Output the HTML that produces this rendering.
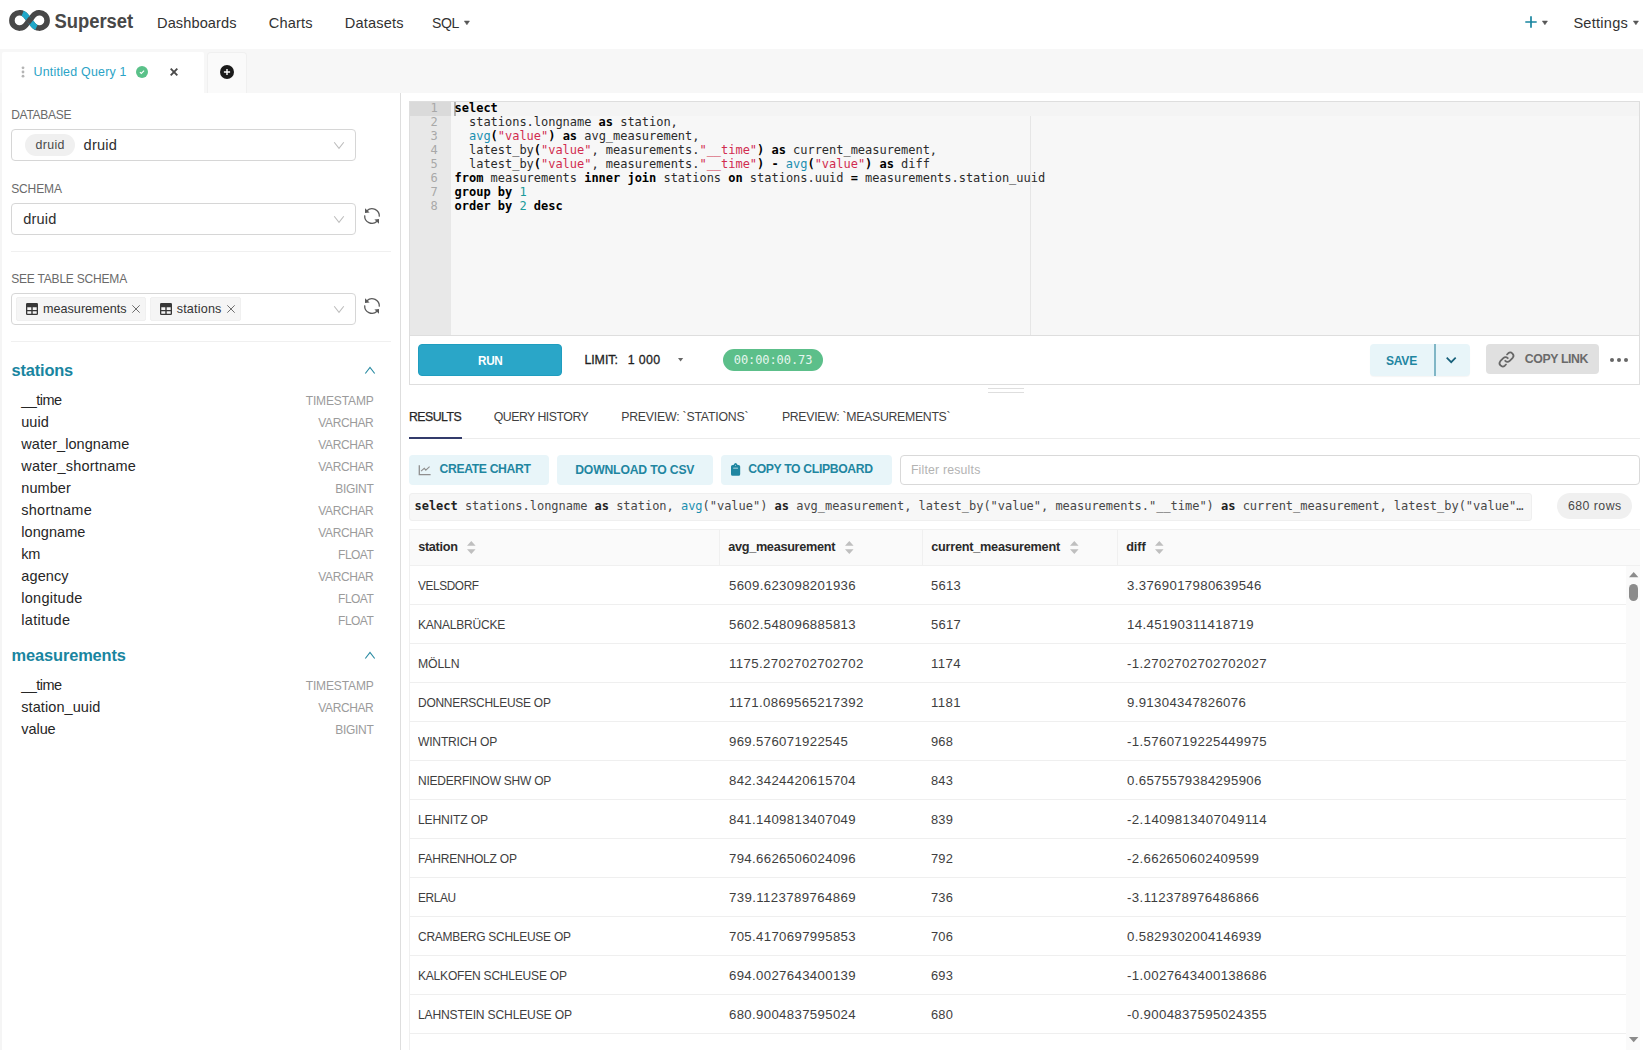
<!DOCTYPE html>
<html lang="en">
<head>
<meta charset="utf-8">
<title>Superset - SQL Lab</title>
<style>
*{box-sizing:border-box;margin:0;padding:0}
html,body{width:1643px;height:1050px;overflow:hidden;background:#fff}
body{position:relative;font-family:"Liberation Sans",sans-serif;color:#333;font-size:14px}
.a{position:absolute;white-space:nowrap}
.mono{font-family:"DejaVu Sans Mono","Liberation Mono",monospace}
svg{position:absolute;overflow:visible}
b{font-weight:bold;color:#000}
.k1{color:#1a8fb0}
.k2{color:#d12c4f}
.k3{color:#1a9a9a}
</style>
</head>
<body>

<!-- NAV -->
<div class="a" style="left:0px;top:0px;width:1643px;height:49px;background:#fff"></div>
<svg style="left:0;top:0" width="150" height="48" viewBox="0 0 150 48">
<path d="M25.59 15.57 A7.7 7.7 0 1 0 25.59 25.23 L33.41 15.57 A7.7 7.7 0 1 1 33.41 25.23 Z" fill="none" stroke="#484848" stroke-width="5.6" stroke-linejoin="round"/>
<path d="M22.6 13.3 A7.7 7.7 0 0 1 25.59 15.57 L33.41 25.23 A7.7 7.7 0 0 0 36.4 27.5" fill="none" stroke="#20a7c9" stroke-width="5.6"/>
<path d="M27.6 22.75 L31.4 18.05" fill="none" stroke="#484848" stroke-width="5.6"/>
<text x="54.4" y="27.5" font-family="Liberation Sans, sans-serif" font-weight="bold" font-size="20" fill="#484848" textLength="78.8" lengthAdjust="spacingAndGlyphs">Superset</text>
</svg>
<div class="a" style="top:12.5px;font-size:14.6px;line-height:20px;height:20px;left:157px;color:#323232;letter-spacing:0.089px;">Dashboards</div>
<div class="a" style="top:12.5px;font-size:14.6px;line-height:20px;height:20px;left:268.8px;color:#323232;letter-spacing:0.163px;">Charts</div>
<div class="a" style="top:12.5px;font-size:14.6px;line-height:20px;height:20px;left:344.8px;color:#323232;letter-spacing:0.172px;">Datasets</div>
<div class="a" style="top:12.5px;font-size:14.6px;line-height:20px;height:20px;left:431.7px;color:#323232;letter-spacing:-0.374px;transform:scaleX(0.9630);transform-origin:0 50%;">SQL</div>
<svg style="left:464.1px;top:21px" width="5.8" height="3.8" viewBox="0 0 5.8 3.8"><path d="M0.3 0H5.5L2.9 3.8Z" fill="#555" stroke="#555" stroke-width="0.5" stroke-linejoin="round"/></svg>
<svg style="left:1525.2px;top:16px" width="12" height="12" viewBox="0 0 12 12"><path d="M6 0.3V11.7M0.3 6H11.7" stroke="#1985a0" stroke-width="1.7" fill="none"/></svg>
<svg style="left:1541.9px;top:20.9px" width="5.8" height="3.8" viewBox="0 0 5.8 3.8"><path d="M0.3 0H5.5L2.9 3.8Z" fill="#555" stroke="#555" stroke-width="0.5" stroke-linejoin="round"/></svg>
<div class="a" style="top:12.5px;font-size:14.6px;line-height:20px;height:20px;left:1573.4px;color:#323232;letter-spacing:0.238px;">Settings</div>
<svg style="left:1632.9px;top:20.9px" width="5.8" height="3.8" viewBox="0 0 5.8 3.8"><path d="M0.3 0H5.5L2.9 3.8Z" fill="#555" stroke="#555" stroke-width="0.5" stroke-linejoin="round"/></svg>
<!-- TABBAR -->
<div class="a" style="left:0px;top:49px;width:1643px;height:44px;background:#f7f7f7"></div>
<div class="a" style="left:2px;top:52px;width:202px;height:41px;background:#fff;border-radius:2px 2px 0 0"></div>
<div class="a" style="left:207px;top:52px;width:40px;height:41px;background:#fafafa;border:1px solid #f0f0f0;border-bottom:0;border-radius:4px 4px 0 0"></div>
<div class="a" style="left:0px;top:93px;width:2px;height:957px;background:#f5f5f5"></div>
<div class="a" style="left:400px;top:93px;width:1px;height:957px;background:#dedede"></div>
<svg style="left:21.4px;top:66.4px" width="4" height="12" viewBox="0 0 4 12"><circle cx="2" cy="1.8" r="1.4" fill="#b4b4b4"/><circle cx="2" cy="6" r="1.4" fill="#b4b4b4"/><circle cx="2" cy="10.2" r="1.4" fill="#b4b4b4"/></svg>
<div class="a" style="top:62px;font-size:12.4px;line-height:20px;height:20px;left:33.5px;color:#2ba3c6;letter-spacing:0.231px;">Untitled Query 1</div>
<svg style="left:136px;top:66px" width="12" height="12" viewBox="0 0 12 12"><circle cx="6" cy="6" r="6" fill="#5ac189"/><path d="M3.9 6.1L5.3 7.5L8.1 4.7" stroke="#fff" stroke-width="1.1" fill="none"/></svg>
<svg style="left:170px;top:68.1px" width="8" height="8" viewBox="0 0 8 8"><path d="M0.7 0.7L7.3 7.3M7.3 0.7L0.7 7.3" stroke="#4a4a4a" stroke-width="1.9" fill="none"/></svg>
<svg style="left:220px;top:65px" width="14" height="14" viewBox="0 0 14 14"><circle cx="7" cy="7" r="7" fill="#1b1b1b"/><path d="M7 3.9V10.1M3.9 7H10.1" stroke="#fff" stroke-width="1.4" fill="none"/></svg>
<!-- LEFT PANEL -->
<div class="a" style="top:104.5px;font-size:12px;line-height:20px;height:20px;left:11.2px;color:#6a6a6a;letter-spacing:-0.264px;">DATABASE</div>
<div class="a" style="top:178.5px;font-size:12px;line-height:20px;height:20px;left:11.2px;color:#6a6a6a;letter-spacing:-0.129px;">SCHEMA</div>
<div class="a" style="top:268.5px;font-size:12px;line-height:20px;height:20px;left:11.2px;color:#6a6a6a;letter-spacing:-0.196px;">SEE TABLE SCHEMA</div>
<div class="a" style="left:11px;top:129px;width:345px;height:32px;border:1px solid #d6d6d6;border-radius:4px;background:#fff"></div>
<div class="a" style="left:11px;top:203px;width:345px;height:32px;border:1px solid #d6d6d6;border-radius:4px;background:#fff"></div>
<div class="a" style="left:11px;top:293px;width:345px;height:32px;border:1px solid #d6d6d6;border-radius:4px;background:#fff"></div>
<div class="a" style="left:25px;top:134px;width:50px;height:22px;background:#f0f0f0;border-radius:11px"></div>
<div class="a" style="top:135px;font-size:12.4px;line-height:20px;height:20px;left:35.4px;color:#4a4a4a;letter-spacing:0.359px;">druid</div>
<div class="a" style="top:135px;font-size:14.6px;line-height:20px;height:20px;left:83.6px;color:#2e2e2e;letter-spacing:0.187px;">druid</div>
<div class="a" style="top:209px;font-size:14.6px;line-height:20px;height:20px;left:23.2px;color:#2e2e2e;letter-spacing:0.187px;">druid</div>
<svg style="left:334px;top:142.2px" width="10" height="7" viewBox="0 0 10 7"><path d="M0.2 0.2L5 6.4L9.8 0.2" fill="none" stroke="#bdbdbd" stroke-width="1.05"/></svg>
<svg style="left:334px;top:216.2px" width="10" height="7" viewBox="0 0 10 7"><path d="M0.2 0.2L5 6.4L9.8 0.2" fill="none" stroke="#bdbdbd" stroke-width="1.05"/></svg>
<svg style="left:334px;top:306.20000000000005px" width="10" height="7" viewBox="0 0 10 7"><path d="M0.2 0.2L5 6.4L9.8 0.2" fill="none" stroke="#bdbdbd" stroke-width="1.05"/></svg>
<svg style="left:364px;top:208px" width="16" height="16" viewBox="0 0 16 16"><g fill="none" stroke="#5a5a5a" stroke-width="1.3"><path d="M2.93 2.75A7.3 7.3 0 0 1 15.27 8.64"/><path d="M0.73 7.36A7.3 7.3 0 0 0 13.07 13.25"/></g><path d="M1 0.3V4.9L5.6 4.4Z M15 15.7V11.1L10.4 11.6Z" fill="#5a5a5a"/></svg>
<svg style="left:364px;top:298px" width="16" height="16" viewBox="0 0 16 16"><g fill="none" stroke="#5a5a5a" stroke-width="1.3"><path d="M2.93 2.75A7.3 7.3 0 0 1 15.27 8.64"/><path d="M0.73 7.36A7.3 7.3 0 0 0 13.07 13.25"/></g><path d="M1 0.3V4.9L5.6 4.4Z M15 15.7V11.1L10.4 11.6Z" fill="#5a5a5a"/></svg>
<div class="a" style="left:11px;top:251px;width:380px;height:1px;background:#f0f0f0"></div>
<div class="a" style="left:11px;top:341px;width:380px;height:1px;background:#f0f0f0"></div>
<div class="a" style="left:16px;top:297px;width:130px;height:24px;background:#f5f5f5;border:1px solid #f0f0f0;border-radius:2px"></div>
<div class="a" style="left:150px;top:297px;width:91px;height:24px;background:#f5f5f5;border:1px solid #f0f0f0;border-radius:2px"></div>
<svg style="left:26px;top:303px" width="12" height="12" viewBox="0 0 12 12"><rect x="0" y="0" width="12" height="12" rx="1.2" fill="#383838"/><path d="M1.3 4.3H5.3V6.9H1.3ZM6.7 4.3H10.7V6.9H6.7ZM1.3 8.2H5.3V10.7H1.3ZM6.7 8.2H10.7V10.7H6.7Z" fill="#f5f5f5"/></svg>
<div class="a" style="top:299px;font-size:12.6px;line-height:20px;height:20px;left:43px;color:#333;letter-spacing:0.018px;">measurements</div>
<svg style="left:132px;top:305px" width="8" height="8" viewBox="0 0 8 8"><path d="M0.3 0.3L7.7 7.7M7.7 0.3L0.3 7.7" stroke="#6e6e6e" stroke-width="1" fill="none"/></svg>
<svg style="left:160px;top:303px" width="12" height="12" viewBox="0 0 12 12"><rect x="0" y="0" width="12" height="12" rx="1.2" fill="#383838"/><path d="M1.3 4.3H5.3V6.9H1.3ZM6.7 4.3H10.7V6.9H6.7ZM1.3 8.2H5.3V10.7H1.3ZM6.7 8.2H10.7V10.7H6.7Z" fill="#f5f5f5"/></svg>
<div class="a" style="top:299px;font-size:12.6px;line-height:20px;height:20px;left:176.7px;color:#333;letter-spacing:0.185px;">stations</div>
<svg style="left:227px;top:305px" width="8" height="8" viewBox="0 0 8 8"><path d="M0.3 0.3L7.7 7.7M7.7 0.3L0.3 7.7" stroke="#6e6e6e" stroke-width="1" fill="none"/></svg>
<div class="a" style="top:360.217px;font-size:16.4px;line-height:20px;height:20px;left:11.5px;color:#1985a0;font-weight:bold;letter-spacing:-0.163px;">stations</div>
<svg style="left:365px;top:367.4px" width="10" height="7" viewBox="0 0 10 7"><path d="M0.3 6.5L5 0.5L9.7 6.5" fill="none" stroke="#2a8ba3" stroke-width="1.15"/></svg>
<div class="a" style="top:389.676px;font-size:14.5px;line-height:20px;height:20px;left:21.3px;color:#262626;letter-spacing:-0.546px;">__time</div>
<div class="a" style="top:390.642px;font-size:12px;line-height:20px;height:20px;left:305.7px;color:#9b9b9b;letter-spacing:-0.128px;">TIMESTAMP</div>
<div class="a" style="top:411.676px;font-size:14.5px;line-height:20px;height:20px;left:21.3px;color:#262626;letter-spacing:-0.007px;">uuid</div>
<div class="a" style="top:412.642px;font-size:12px;line-height:20px;height:20px;left:318.3px;color:#9b9b9b;letter-spacing:-0.383px;">VARCHAR</div>
<div class="a" style="top:433.676px;font-size:14.5px;line-height:20px;height:20px;left:21.3px;color:#262626;letter-spacing:0.060px;">water_longname</div>
<div class="a" style="top:434.642px;font-size:12px;line-height:20px;height:20px;left:318.3px;color:#9b9b9b;letter-spacing:-0.383px;">VARCHAR</div>
<div class="a" style="top:455.676px;font-size:14.5px;line-height:20px;height:20px;left:21.3px;color:#262626;letter-spacing:0.169px;">water_shortname</div>
<div class="a" style="top:456.642px;font-size:12px;line-height:20px;height:20px;left:318.3px;color:#9b9b9b;letter-spacing:-0.383px;">VARCHAR</div>
<div class="a" style="top:477.676px;font-size:14.5px;line-height:20px;height:20px;left:21.3px;color:#262626;letter-spacing:0.066px;">number</div>
<div class="a" style="top:478.642px;font-size:12px;line-height:20px;height:20px;left:335.3px;color:#9b9b9b;letter-spacing:-0.303px;">BIGINT</div>
<div class="a" style="top:499.676px;font-size:14.5px;line-height:20px;height:20px;left:21.3px;color:#262626;letter-spacing:0.236px;">shortname</div>
<div class="a" style="top:500.642px;font-size:12px;line-height:20px;height:20px;left:318.3px;color:#9b9b9b;letter-spacing:-0.383px;">VARCHAR</div>
<div class="a" style="top:521.676px;font-size:14.5px;line-height:20px;height:20px;left:21.3px;color:#262626;letter-spacing:0.059px;">longname</div>
<div class="a" style="top:522.642px;font-size:12px;line-height:20px;height:20px;left:318.3px;color:#9b9b9b;letter-spacing:-0.383px;">VARCHAR</div>
<div class="a" style="top:543.676px;font-size:14.5px;line-height:20px;height:20px;left:21.3px;color:#262626;letter-spacing:-0.344px;">km</div>
<div class="a" style="top:544.642px;font-size:12px;line-height:20px;height:20px;left:338.1px;color:#9b9b9b;letter-spacing:-0.520px;">FLOAT</div>
<div class="a" style="top:565.676px;font-size:14.5px;line-height:20px;height:20px;left:21.3px;color:#262626;letter-spacing:0.107px;">agency</div>
<div class="a" style="top:566.642px;font-size:12px;line-height:20px;height:20px;left:318.3px;color:#9b9b9b;letter-spacing:-0.383px;">VARCHAR</div>
<div class="a" style="top:587.676px;font-size:14.5px;line-height:20px;height:20px;left:21.3px;color:#262626;letter-spacing:0.268px;">longitude</div>
<div class="a" style="top:588.642px;font-size:12px;line-height:20px;height:20px;left:338.1px;color:#9b9b9b;letter-spacing:-0.520px;">FLOAT</div>
<div class="a" style="top:609.676px;font-size:14.5px;line-height:20px;height:20px;left:21.3px;color:#262626;letter-spacing:0.276px;">latitude</div>
<div class="a" style="top:610.642px;font-size:12px;line-height:20px;height:20px;left:338.1px;color:#9b9b9b;letter-spacing:-0.520px;">FLOAT</div>
<div class="a" style="top:645.017px;font-size:16.4px;line-height:20px;height:20px;left:11.6px;color:#1985a0;font-weight:bold;letter-spacing:-0.128px;">measurements</div>
<svg style="left:365px;top:652.4000000000001px" width="10" height="7" viewBox="0 0 10 7"><path d="M0.3 6.5L5 0.5L9.7 6.5" fill="none" stroke="#2a8ba3" stroke-width="1.15"/></svg>
<div class="a" style="top:675.176px;font-size:14.5px;line-height:20px;height:20px;left:21.3px;color:#262626;letter-spacing:-0.546px;">__time</div>
<div class="a" style="top:676.142px;font-size:12px;line-height:20px;height:20px;left:305.7px;color:#9b9b9b;letter-spacing:-0.128px;">TIMESTAMP</div>
<div class="a" style="top:697.176px;font-size:14.5px;line-height:20px;height:20px;left:21.3px;color:#262626;letter-spacing:0.072px;">station_uuid</div>
<div class="a" style="top:698.142px;font-size:12px;line-height:20px;height:20px;left:318.3px;color:#9b9b9b;letter-spacing:-0.383px;">VARCHAR</div>
<div class="a" style="top:719.176px;font-size:14.5px;line-height:20px;height:20px;left:21.3px;color:#262626;letter-spacing:-0.068px;">value</div>
<div class="a" style="top:720.142px;font-size:12px;line-height:20px;height:20px;left:335.3px;color:#9b9b9b;letter-spacing:-0.303px;">BIGINT</div>
<!-- EDITOR -->
<div class="a" style="left:409px;top:101px;width:1231px;height:284px;border:1px solid #dedede;background:#fff"></div>
<div class="a" style="left:410px;top:102px;width:1229px;height:233px;background:#f7f7f7"></div>
<div class="a" style="left:410px;top:335px;width:1229px;height:1px;background:#dedede"></div>
<div class="a" style="left:410px;top:102px;width:41px;height:233px;background:#e8e8e8"></div>
<div class="a" style="left:410px;top:102px;width:41px;height:14px;background:#dadada"></div>
<div class="a" style="left:451px;top:102px;width:1188px;height:14px;background:#f4f4f4"></div>
<div class="a" style="left:1030px;top:116px;width:1px;height:219px;background:#e6e6e6"></div>
<div class="a" style="left:454px;top:102px;width:2px;height:14px;background:#b2b2b2"></div>
<div class="a mono" style="top:97.642px;font-size:12px;line-height:20px;height:20px;left:454.6px;color:#2b2b2b;white-space:pre;letter-spacing:-0.024px;"><b>select</b></div>
<div class="a mono" style="top:97.642px;font-size:12px;line-height:20px;height:20px;right:1205.4px;color:#a8a8a8;">1</div>
<div class="a mono" style="top:111.642px;font-size:12px;line-height:20px;height:20px;left:454.6px;color:#2b2b2b;white-space:pre;letter-spacing:-0.024px;">  stations.longname <b>as</b> station,</div>
<div class="a mono" style="top:111.642px;font-size:12px;line-height:20px;height:20px;right:1205.4px;color:#a8a8a8;">2</div>
<div class="a mono" style="top:125.642px;font-size:12px;line-height:20px;height:20px;left:454.6px;color:#2b2b2b;white-space:pre;letter-spacing:-0.024px;">  <span class="k1">avg</span><b>(</b><span class="k2">&quot;value&quot;</span><b>)</b> <b>as</b> avg_measurement,</div>
<div class="a mono" style="top:125.642px;font-size:12px;line-height:20px;height:20px;right:1205.4px;color:#a8a8a8;">3</div>
<div class="a mono" style="top:139.642px;font-size:12px;line-height:20px;height:20px;left:454.6px;color:#2b2b2b;white-space:pre;letter-spacing:-0.024px;">  latest_by<b>(</b><span class="k2">&quot;value&quot;</span>, measurements.<span class="k2">&quot;__time&quot;</span><b>)</b> <b>as</b> current_measurement,</div>
<div class="a mono" style="top:139.642px;font-size:12px;line-height:20px;height:20px;right:1205.4px;color:#a8a8a8;">4</div>
<div class="a mono" style="top:153.642px;font-size:12px;line-height:20px;height:20px;left:454.6px;color:#2b2b2b;white-space:pre;letter-spacing:-0.024px;">  latest_by<b>(</b><span class="k2">&quot;value&quot;</span>, measurements.<span class="k2">&quot;__time&quot;</span><b>)</b> <b>-</b> <span class="k1">avg</span><b>(</b><span class="k2">&quot;value&quot;</span><b>)</b> <b>as</b> diff</div>
<div class="a mono" style="top:153.642px;font-size:12px;line-height:20px;height:20px;right:1205.4px;color:#a8a8a8;">5</div>
<div class="a mono" style="top:167.642px;font-size:12px;line-height:20px;height:20px;left:454.6px;color:#2b2b2b;white-space:pre;letter-spacing:-0.024px;"><b>from</b> measurements <b>inner</b> <b>join</b> stations <b>on</b> stations.uuid <b>=</b> measurements.station_uuid</div>
<div class="a mono" style="top:167.642px;font-size:12px;line-height:20px;height:20px;right:1205.4px;color:#a8a8a8;">6</div>
<div class="a mono" style="top:181.642px;font-size:12px;line-height:20px;height:20px;left:454.6px;color:#2b2b2b;white-space:pre;letter-spacing:-0.024px;"><b>group</b> <b>by</b> <span class="k3">1</span></div>
<div class="a mono" style="top:181.642px;font-size:12px;line-height:20px;height:20px;right:1205.4px;color:#a8a8a8;">7</div>
<div class="a mono" style="top:195.642px;font-size:12px;line-height:20px;height:20px;left:454.6px;color:#2b2b2b;white-space:pre;letter-spacing:-0.024px;"><b>order</b> <b>by</b> <span class="k3">2</span> <b>desc</b></div>
<div class="a mono" style="top:195.642px;font-size:12px;line-height:20px;height:20px;right:1205.4px;color:#a8a8a8;">8</div>
<!-- TOOLBAR -->
<div class="a" style="left:418px;top:344px;width:144px;height:32px;background:#2aa6c8;border:1px solid #1f9dbf;border-radius:4px"></div>
<div class="a" style="top:350.703px;font-size:12.4px;line-height:20px;height:20px;left:477.7px;color:#fff;font-weight:bold;letter-spacing:-0.326px;transform:scaleX(0.9463);transform-origin:0 50%;">RUN</div>
<div class="a" style="top:349.703px;font-size:12.4px;line-height:20px;height:20px;left:584.4px;color:#1f1f1f;letter-spacing:-0.050px;-webkit-text-stroke:0.3px #1f1f1f;">LIMIT:</div>
<div class="a" style="top:349.703px;font-size:12.4px;line-height:20px;height:20px;left:627.7px;color:#1f1f1f;letter-spacing:0.371px;-webkit-text-stroke:0.3px #1f1f1f;">1 000</div>
<svg style="left:678.4px;top:358.3px" width="5.2" height="3.5" viewBox="0 0 5.2 3.5"><path d="M0 0H5.2L2.6 3.5Z" fill="#666"/></svg>
<div class="a" style="left:723px;top:349px;width:100px;height:22px;background:#5cbf8a;border-radius:11px"></div>
<div class="a mono" style="top:349.842px;font-size:12px;line-height:20px;height:20px;left:733.8px;color:#e6f6ee;letter-spacing:-0.088px;">00:00:00.73</div>
<div class="a" style="left:1370px;top:344px;width:100px;height:32px;background:#e8f5f9;border-radius:4px;box-shadow:0 1px 1px rgba(0,0,0,.04)"></div>
<div class="a" style="left:1434.3px;top:344px;width:1.7px;height:32px;background:#80b6c6"></div>
<div class="a" style="top:350.865px;font-size:12.8px;line-height:20px;height:20px;left:1385.9px;color:#1f86a1;font-weight:bold;letter-spacing:-0.287px;transform:scaleX(0.9441);transform-origin:0 50%;">SAVE</div>
<svg style="left:1446px;top:357px" width="10.4" height="6.4" viewBox="0 0 10.4 6.4"><path d="M0.7 0.7L5.2 5.2L9.7 0.7" fill="none" stroke="#17607a" stroke-width="1.7"/></svg>
<div class="a" style="left:1486px;top:344px;width:113px;height:30px;background:#e0e0e0;border-radius:4px"></div>
<svg style="left:1498px;top:351px" width="17" height="17" viewBox="0 0 17 17"><g fill="none" stroke="#666" stroke-width="1.75" stroke-linecap="round"><path d="M7.2 9.8a3.2 3.2 0 0 0 4.5 0l3-3a3.2 3.2 0 0 0-4.5-4.5l-1.2 1.2"/><path d="M9.8 7.2a3.2 3.2 0 0 0-4.5 0l-3 3a3.2 3.2 0 0 0 4.5 4.5l1.2-1.2"/></g></svg>
<div class="a" style="top:349.138px;font-size:12.3px;line-height:20px;height:20px;left:1524.8px;color:#6a6a6a;font-weight:bold;letter-spacing:-0.392px;">COPY LINK</div>
<svg style="left:1609px;top:357px" width="21" height="6" viewBox="0 0 21 6"><circle cx="3" cy="3" r="2" fill="#666"/><circle cx="10" cy="3" r="2" fill="#666"/><circle cx="17" cy="3" r="2" fill="#666"/></svg>
<div class="a" style="left:988px;top:388px;width:36px;height:1px;background:#dedede"></div>
<div class="a" style="left:988px;top:392px;width:36px;height:1px;background:#dedede"></div>
<!-- RESULTS TABS -->
<div class="a" style="top:406.638px;font-size:12.3px;line-height:20px;height:20px;left:409px;color:#262626;letter-spacing:-0.519px;-webkit-text-stroke:0.25px #262626;">RESULTS</div>
<div class="a" style="top:406.638px;font-size:12.3px;line-height:20px;height:20px;left:493.7px;color:#3f3f3f;letter-spacing:-0.485px;">QUERY HISTORY</div>
<div class="a" style="top:406.638px;font-size:12.3px;line-height:20px;height:20px;left:621.2px;color:#3f3f3f;letter-spacing:-0.216px;">PREVIEW: `STATIONS`</div>
<div class="a" style="top:406.638px;font-size:12.3px;line-height:20px;height:20px;left:781.9px;color:#3f3f3f;letter-spacing:-0.303px;">PREVIEW: `MEASUREMENTS`</div>
<div class="a" style="left:409px;top:438px;width:1231px;height:1px;background:#ececec"></div>
<div class="a" style="left:409px;top:436.7px;width:53px;height:2.3px;background:#323b6b"></div>
<!-- ACTIONS -->
<div class="a" style="left:409px;top:455px;width:140px;height:30px;background:#e8f5f9;border-radius:4px"></div>
<svg style="left:418.4px;top:465px" width="13" height="11" viewBox="0 0 13 11"><g fill="none" stroke="#8f8f8f" stroke-width="1.3"><path d="M1.3 0.2V9.6H12.6"/><path d="M3 6.2L6.3 3.3L7.8 5.1L11.6 1.7" stroke-width="1.1"/></g></svg>
<div class="a" style="top:458.773px;font-size:12.2px;line-height:20px;height:20px;left:439.5px;color:#1f86a1;font-weight:bold;letter-spacing:-0.350px;">CREATE CHART</div>
<div class="a" style="left:557px;top:455px;width:156px;height:30px;background:#e8f5f9;border-radius:4px"></div>
<div class="a" style="top:459.673px;font-size:12.2px;line-height:20px;height:20px;left:575.2px;color:#1f86a1;font-weight:bold;letter-spacing:-0.168px;">DOWNLOAD TO CSV</div>
<div class="a" style="left:721px;top:455px;width:171px;height:30px;background:#e8f5f9;border-radius:4px"></div>
<svg style="left:730.8px;top:463.3px" width="9.2" height="12.8" viewBox="0 0 9.2 12.8"><path d="M1.6 2H2.5Q3.6 0 4.6 0Q5.6 0 6.7 2H7.6A1.6 1.6 0 0 1 9.2 3.6V11.2A1.6 1.6 0 0 1 7.6 12.8H1.6A1.6 1.6 0 0 1 0 11.2V3.6A1.6 1.6 0 0 1 1.6 2Z" fill="#1f86a1"/><rect x="2.2" y="4.7" width="4.8" height="0.9" rx="0.3" fill="#dff0f5"/><circle cx="4.6" cy="2.3" r="0.5" fill="#dff0f5"/></svg>
<div class="a" style="top:458.773px;font-size:12.2px;line-height:20px;height:20px;left:748.2px;color:#1f86a1;font-weight:bold;letter-spacing:-0.334px;">COPY TO CLIPBOARD</div>
<div class="a" style="left:900px;top:455px;width:740px;height:30px;border:1px solid #d9d9d9;border-radius:4px;background:#fff"></div>
<div class="a" style="top:460.038px;font-size:12.3px;line-height:20px;height:20px;left:910.9px;color:#b3b3b3;letter-spacing:0.187px;">Filter results</div>
<!-- SQL PREVIEW -->
<div class="a" style="left:409px;top:493px;width:1123px;height:27.5px;background:#f7f7f7;border:1px solid #efefef;border-radius:3px"></div>
<div class="a mono" style="top:495.542px;font-size:12px;line-height:20px;height:20px;left:414.5px;color:#474747;white-space:pre;letter-spacing:-0.024px;"><b style="color:#222">select</b> stations.longname <b style="color:#222">as</b> station, <span class="k1">avg</span>(&quot;value&quot;) <b style="color:#222">as</b> avg_measurement, latest_by(&quot;value&quot;, measurements.&quot;__time&quot;) <b style="color:#222">as</b> current_measurement, latest_by(&quot;value&quot;…</div>
<div class="a" style="left:1557px;top:493px;width:75px;height:25.6px;background:#f0f0f0;border-radius:13px"></div>
<div class="a" style="top:495.738px;font-size:12.3px;line-height:20px;height:20px;left:1567.9px;color:#484848;letter-spacing:0.485px;">680 rows</div>
<!-- TABLE -->
<div class="a" style="left:409px;top:529px;width:1231px;height:37px;background:#fafafa;border-top:1px solid #f0f0f0;border-bottom:1px solid #f0f0f0"></div>
<div class="a" style="left:409px;top:529px;width:1px;height:521px;background:#f0f0f0"></div>
<div class="a" style="left:1626px;top:566px;width:14px;height:484px;background:#fafafa"></div>
<div class="a" style="left:719px;top:530px;width:1px;height:35px;background:#f0f0f0"></div>
<div class="a" style="left:922px;top:530px;width:1px;height:35px;background:#f0f0f0"></div>
<div class="a" style="left:1117px;top:530px;width:1px;height:35px;background:#f0f0f0"></div>
<div class="a" style="top:536.799px;font-size:12.7px;line-height:20px;height:20px;left:418.2px;color:#2a2a2a;font-weight:bold;letter-spacing:-0.316px;">station</div>
<svg style="left:467.2px;top:541.2px" width="8.6" height="13" viewBox="0 0 8.6 13"><path d="M4.3 0L8.6 4.8H0Z M4.3 12.9L8.6 8.2H0Z" fill="#bfbfbf"/></svg>
<div class="a" style="top:536.799px;font-size:12.7px;line-height:20px;height:20px;left:728.2px;color:#2a2a2a;font-weight:bold;letter-spacing:-0.303px;">avg_measurement</div>
<svg style="left:844.7000000000002px;top:541.2px" width="8.6" height="13" viewBox="0 0 8.6 13"><path d="M4.3 0L8.6 4.8H0Z M4.3 12.9L8.6 8.2H0Z" fill="#bfbfbf"/></svg>
<div class="a" style="top:536.799px;font-size:12.7px;line-height:20px;height:20px;left:931.2px;color:#2a2a2a;font-weight:bold;letter-spacing:-0.238px;">current_measurement</div>
<svg style="left:1069.5px;top:541.2px" width="8.6" height="13" viewBox="0 0 8.6 13"><path d="M4.3 0L8.6 4.8H0Z M4.3 12.9L8.6 8.2H0Z" fill="#bfbfbf"/></svg>
<div class="a" style="top:536.799px;font-size:12.7px;line-height:20px;height:20px;left:1126.2px;color:#2a2a2a;font-weight:bold;letter-spacing:-0.078px;">diff</div>
<svg style="left:1155.0px;top:541.2px" width="8.6" height="13" viewBox="0 0 8.6 13"><path d="M4.3 0L8.6 4.8H0Z M4.3 12.9L8.6 8.2H0Z" fill="#bfbfbf"/></svg>
<div class="a" style="top:575.769px;font-size:12.5px;line-height:20px;height:20px;left:418.3px;color:#3e3e3e;letter-spacing:-0.387px;transform:scaleX(0.9431);transform-origin:0 50%;">VELSDORF</div>
<div class="a" style="top:575.734px;font-size:12.6px;line-height:20px;height:20px;left:728.6px;color:#3e3e3e;letter-spacing:0.329px;transform:scaleX(1.0477);transform-origin:0 50%;">5609.623098201936</div>
<div class="a" style="top:575.734px;font-size:12.6px;line-height:20px;height:20px;left:931.4px;color:#3e3e3e;letter-spacing:0.270px;transform:scaleX(1.0298);transform-origin:0 50%;">5613</div>
<div class="a" style="top:575.734px;font-size:12.6px;line-height:20px;height:20px;left:1126.5px;color:#3e3e3e;letter-spacing:0.332px;transform:scaleX(1.0482);transform-origin:0 50%;">3.3769017980639546</div>
<div class="a" style="left:410px;top:604px;width:1216px;height:1px;background:#efefef"></div>
<div class="a" style="top:614.769px;font-size:12.5px;line-height:20px;height:20px;left:418.3px;color:#3e3e3e;letter-spacing:-0.241px;transform:scaleX(0.9627);transform-origin:0 50%;">KANALBRÜCKE</div>
<div class="a" style="top:614.734px;font-size:12.6px;line-height:20px;height:20px;left:728.6px;color:#3e3e3e;letter-spacing:0.329px;transform:scaleX(1.0477);transform-origin:0 50%;">5602.548096885813</div>
<div class="a" style="top:614.734px;font-size:12.6px;line-height:20px;height:20px;left:931.4px;color:#3e3e3e;letter-spacing:0.270px;transform:scaleX(1.0298);transform-origin:0 50%;">5617</div>
<div class="a" style="top:614.734px;font-size:12.6px;line-height:20px;height:20px;left:1126.5px;color:#3e3e3e;letter-spacing:0.355px;transform:scaleX(1.0522);transform-origin:0 50%;">14.45190311418719</div>
<div class="a" style="left:410px;top:643px;width:1216px;height:1px;background:#efefef"></div>
<div class="a" style="top:653.769px;font-size:12.5px;line-height:20px;height:20px;left:418.3px;color:#3e3e3e;letter-spacing:-0.151px;transform:scaleX(0.9794);transform-origin:0 50%;">MÖLLN</div>
<div class="a" style="top:653.734px;font-size:12.6px;line-height:20px;height:20px;left:728.6px;color:#3e3e3e;letter-spacing:0.357px;transform:scaleX(1.0524);transform-origin:0 50%;">1175.2702702702702</div>
<div class="a" style="top:653.734px;font-size:12.6px;line-height:20px;height:20px;left:931.4px;color:#3e3e3e;letter-spacing:0.414px;transform:scaleX(1.0481);transform-origin:0 50%;">1174</div>
<div class="a" style="top:653.734px;font-size:12.6px;line-height:20px;height:20px;left:1126.5px;color:#3e3e3e;letter-spacing:0.339px;transform:scaleX(1.0506);transform-origin:0 50%;">-1.2702702702702027</div>
<div class="a" style="left:410px;top:682px;width:1216px;height:1px;background:#efefef"></div>
<div class="a" style="top:692.769px;font-size:12.5px;line-height:20px;height:20px;left:418.3px;color:#3e3e3e;letter-spacing:-0.266px;transform:scaleX(0.9573);transform-origin:0 50%;">DONNERSCHLEUSE OP</div>
<div class="a" style="top:692.734px;font-size:12.6px;line-height:20px;height:20px;left:728.6px;color:#3e3e3e;letter-spacing:0.357px;transform:scaleX(1.0524);transform-origin:0 50%;">1171.0869565217392</div>
<div class="a" style="top:692.734px;font-size:12.6px;line-height:20px;height:20px;left:931.4px;color:#3e3e3e;letter-spacing:0.414px;transform:scaleX(1.0481);transform-origin:0 50%;">1181</div>
<div class="a" style="top:692.734px;font-size:12.6px;line-height:20px;height:20px;left:1126.5px;color:#3e3e3e;letter-spacing:0.326px;transform:scaleX(1.0472);transform-origin:0 50%;">9.91304347826076</div>
<div class="a" style="left:410px;top:721px;width:1216px;height:1px;background:#efefef"></div>
<div class="a" style="top:731.769px;font-size:12.5px;line-height:20px;height:20px;left:418.3px;color:#3e3e3e;letter-spacing:-0.200px;transform:scaleX(0.9655);transform-origin:0 50%;">WINTRICH OP</div>
<div class="a" style="top:731.734px;font-size:12.6px;line-height:20px;height:20px;left:728.6px;color:#3e3e3e;letter-spacing:0.326px;transform:scaleX(1.0472);transform-origin:0 50%;">969.576071922545</div>
<div class="a" style="top:731.734px;font-size:12.6px;line-height:20px;height:20px;left:931.4px;color:#3e3e3e;letter-spacing:0.217px;transform:scaleX(1.0210);transform-origin:0 50%;">968</div>
<div class="a" style="top:731.734px;font-size:12.6px;line-height:20px;height:20px;left:1126.5px;color:#3e3e3e;letter-spacing:0.339px;transform:scaleX(1.0506);transform-origin:0 50%;">-1.5760719225449975</div>
<div class="a" style="left:410px;top:760px;width:1216px;height:1px;background:#efefef"></div>
<div class="a" style="top:770.769px;font-size:12.5px;line-height:20px;height:20px;left:418.3px;color:#3e3e3e;letter-spacing:-0.240px;transform:scaleX(0.9591);transform-origin:0 50%;">NIEDERFINOW SHW OP</div>
<div class="a" style="top:770.734px;font-size:12.6px;line-height:20px;height:20px;left:728.6px;color:#3e3e3e;letter-spacing:0.329px;transform:scaleX(1.0477);transform-origin:0 50%;">842.3424420615704</div>
<div class="a" style="top:770.734px;font-size:12.6px;line-height:20px;height:20px;left:931.4px;color:#3e3e3e;letter-spacing:0.217px;transform:scaleX(1.0210);transform-origin:0 50%;">843</div>
<div class="a" style="top:770.734px;font-size:12.6px;line-height:20px;height:20px;left:1126.5px;color:#3e3e3e;letter-spacing:0.332px;transform:scaleX(1.0482);transform-origin:0 50%;">0.6575579384295906</div>
<div class="a" style="left:410px;top:799px;width:1216px;height:1px;background:#efefef"></div>
<div class="a" style="top:809.769px;font-size:12.5px;line-height:20px;height:20px;left:418.3px;color:#3e3e3e;letter-spacing:-0.166px;transform:scaleX(0.9705);transform-origin:0 50%;">LEHNITZ OP</div>
<div class="a" style="top:809.734px;font-size:12.6px;line-height:20px;height:20px;left:728.6px;color:#3e3e3e;letter-spacing:0.329px;transform:scaleX(1.0477);transform-origin:0 50%;">841.1409813407049</div>
<div class="a" style="top:809.734px;font-size:12.6px;line-height:20px;height:20px;left:931.4px;color:#3e3e3e;letter-spacing:0.217px;transform:scaleX(1.0210);transform-origin:0 50%;">839</div>
<div class="a" style="top:809.734px;font-size:12.6px;line-height:20px;height:20px;left:1126.5px;color:#3e3e3e;letter-spacing:0.363px;transform:scaleX(1.0547);transform-origin:0 50%;">-2.1409813407049114</div>
<div class="a" style="left:410px;top:838px;width:1216px;height:1px;background:#efefef"></div>
<div class="a" style="top:848.769px;font-size:12.5px;line-height:20px;height:20px;left:418.3px;color:#3e3e3e;letter-spacing:-0.228px;transform:scaleX(0.9626);transform-origin:0 50%;">FAHRENHOLZ OP</div>
<div class="a" style="top:848.734px;font-size:12.6px;line-height:20px;height:20px;left:728.6px;color:#3e3e3e;letter-spacing:0.329px;transform:scaleX(1.0477);transform-origin:0 50%;">794.6626506024096</div>
<div class="a" style="top:848.734px;font-size:12.6px;line-height:20px;height:20px;left:931.4px;color:#3e3e3e;letter-spacing:0.217px;transform:scaleX(1.0210);transform-origin:0 50%;">792</div>
<div class="a" style="top:848.734px;font-size:12.6px;line-height:20px;height:20px;left:1126.5px;color:#3e3e3e;letter-spacing:0.337px;transform:scaleX(1.0502);transform-origin:0 50%;">-2.662650602409599</div>
<div class="a" style="left:410px;top:877px;width:1216px;height:1px;background:#efefef"></div>
<div class="a" style="top:887.769px;font-size:12.5px;line-height:20px;height:20px;left:418.3px;color:#3e3e3e;letter-spacing:-0.389px;transform:scaleX(0.9469);transform-origin:0 50%;">ERLAU</div>
<div class="a" style="top:887.734px;font-size:12.6px;line-height:20px;height:20px;left:728.6px;color:#3e3e3e;letter-spacing:0.355px;transform:scaleX(1.0522);transform-origin:0 50%;">739.1123789764869</div>
<div class="a" style="top:887.734px;font-size:12.6px;line-height:20px;height:20px;left:931.4px;color:#3e3e3e;letter-spacing:0.217px;transform:scaleX(1.0210);transform-origin:0 50%;">736</div>
<div class="a" style="top:887.734px;font-size:12.6px;line-height:20px;height:20px;left:1126.5px;color:#3e3e3e;letter-spacing:0.362px;transform:scaleX(1.0546);transform-origin:0 50%;">-3.112378976486866</div>
<div class="a" style="left:410px;top:916px;width:1216px;height:1px;background:#efefef"></div>
<div class="a" style="top:926.769px;font-size:12.5px;line-height:20px;height:20px;left:418.3px;color:#3e3e3e;letter-spacing:-0.256px;transform:scaleX(0.9576);transform-origin:0 50%;">CRAMBERG SCHLEUSE OP</div>
<div class="a" style="top:926.734px;font-size:12.6px;line-height:20px;height:20px;left:728.6px;color:#3e3e3e;letter-spacing:0.329px;transform:scaleX(1.0477);transform-origin:0 50%;">705.4170697995853</div>
<div class="a" style="top:926.734px;font-size:12.6px;line-height:20px;height:20px;left:931.4px;color:#3e3e3e;letter-spacing:0.217px;transform:scaleX(1.0210);transform-origin:0 50%;">706</div>
<div class="a" style="top:926.734px;font-size:12.6px;line-height:20px;height:20px;left:1126.5px;color:#3e3e3e;letter-spacing:0.332px;transform:scaleX(1.0482);transform-origin:0 50%;">0.5829302004146939</div>
<div class="a" style="left:410px;top:955px;width:1216px;height:1px;background:#efefef"></div>
<div class="a" style="top:965.769px;font-size:12.5px;line-height:20px;height:20px;left:418.3px;color:#3e3e3e;letter-spacing:-0.221px;transform:scaleX(0.9620);transform-origin:0 50%;">KALKOFEN SCHLEUSE OP</div>
<div class="a" style="top:965.734px;font-size:12.6px;line-height:20px;height:20px;left:728.6px;color:#3e3e3e;letter-spacing:0.329px;transform:scaleX(1.0477);transform-origin:0 50%;">694.0027643400139</div>
<div class="a" style="top:965.734px;font-size:12.6px;line-height:20px;height:20px;left:931.4px;color:#3e3e3e;letter-spacing:0.217px;transform:scaleX(1.0210);transform-origin:0 50%;">693</div>
<div class="a" style="top:965.734px;font-size:12.6px;line-height:20px;height:20px;left:1126.5px;color:#3e3e3e;letter-spacing:0.339px;transform:scaleX(1.0506);transform-origin:0 50%;">-1.0027643400138686</div>
<div class="a" style="left:410px;top:994px;width:1216px;height:1px;background:#efefef"></div>
<div class="a" style="top:1004.77px;font-size:12.5px;line-height:20px;height:20px;left:418.3px;color:#3e3e3e;letter-spacing:-0.177px;transform:scaleX(0.9685);transform-origin:0 50%;">LAHNSTEIN SCHLEUSE OP</div>
<div class="a" style="top:1004.73px;font-size:12.6px;line-height:20px;height:20px;left:728.6px;color:#3e3e3e;letter-spacing:0.329px;transform:scaleX(1.0477);transform-origin:0 50%;">680.9004837595024</div>
<div class="a" style="top:1004.73px;font-size:12.6px;line-height:20px;height:20px;left:931.4px;color:#3e3e3e;letter-spacing:0.217px;transform:scaleX(1.0210);transform-origin:0 50%;">680</div>
<div class="a" style="top:1004.73px;font-size:12.6px;line-height:20px;height:20px;left:1126.5px;color:#3e3e3e;letter-spacing:0.339px;transform:scaleX(1.0506);transform-origin:0 50%;">-0.9004837595024355</div>
<div class="a" style="left:410px;top:1033px;width:1216px;height:1px;background:#efefef"></div>
<svg style="left:1628.8px;top:572px" width="9.4" height="5.2" viewBox="0 0 9.4 5.2"><path d="M4.7 0L9.4 5.2H0Z" fill="#8b8b8b"/></svg>
<div class="a" style="left:1629px;top:583.8px;width:9.2px;height:17.4px;background:#8b8b8b;border-radius:4.6px"></div>
<svg style="left:1628.8px;top:1037px" width="9.4" height="5.2" viewBox="0 0 9.4 5.2"><path d="M4.7 5.2L9.4 0H0Z" fill="#8b8b8b"/></svg>
</body>
</html>
